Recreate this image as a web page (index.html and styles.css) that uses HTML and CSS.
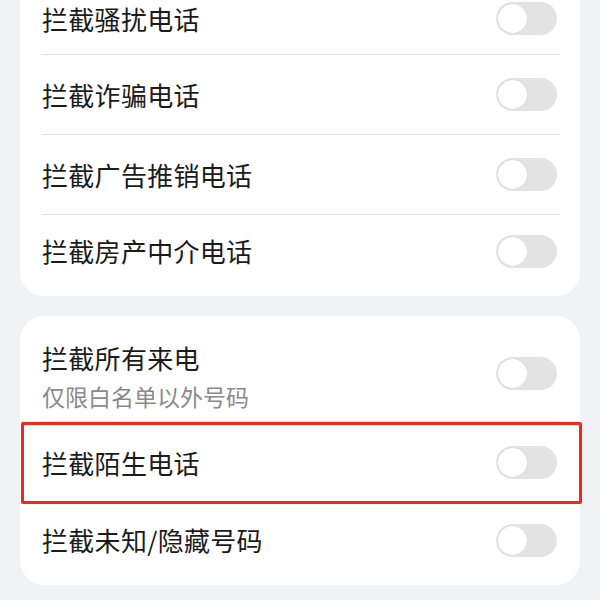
FILE: index.html
```html
<!DOCTYPE html>
<html lang="zh-CN">
<head>
<meta charset="utf-8">
<title>拦截设置</title>
<link rel="stylesheet" href="styles.css">
</head>
<body>
<main class="page">
  <section class="card">
    <div class="row"><span class="title">拦截骚扰电话</span><span class="switch"><span class="knob"></span></span></div>
    <div class="row"><span class="title">拦截诈骗电话</span><span class="switch"><span class="knob"></span></span></div>
    <div class="row"><span class="title">拦截广告推销电话</span><span class="switch"><span class="knob"></span></span></div>
    <div class="row"><span class="title">拦截房产中介电话</span><span class="switch"><span class="knob"></span></span></div>
  </section>
  <section class="card">
    <div class="row row-tall">
      <div class="texts"><span class="title">拦截所有来电</span><span class="sub">仅限白名单以外号码</span></div>
      <span class="switch"><span class="knob"></span></span>
    </div>
    <div class="row row-marked"><span class="title">拦截陌生电话</span><span class="switch"><span class="knob"></span></span></div>
    <div class="row"><span class="title">拦截未知/隐藏号码</span><span class="switch"><span class="knob"></span></span></div>
  </section>
</main>
</body>
</html>
```

FILE: styles.css
```css
html, body {
  margin: 0;
  padding: 0;
  background: #f1f2f4;
  overflow: hidden;
}
body {
  font-family: "Noto Sans CJK SC", "Noto Sans", sans-serif;
  color: #1b1b1b;
}
.page {
  margin-top: -26px;
  padding: 0 20px;
  display: flex;
  flex-direction: column;
  gap: 20px;
}
.card {
  background: #ffffff;
  border-radius: 24px;
  padding: 9px 0;
  display: flex;
  flex-direction: column;
}
.row {
  position: relative;
  display: flex;
  align-items: center;
  justify-content: space-between;
  min-height: 80px;
  margin: 0 21px 0 22px;
  border-bottom: 1px solid #e3e3e5;
  box-sizing: border-box;
}
.row:first-child,
.row:last-child {
  min-height: 72px;
}
.row:last-child {
  border-bottom: none;
}
.row.row-tall {
  min-height: 97px;
}
.row.row-marked {
  min-height: 82px;
}
.row-marked::after {
  content: "";
  position: absolute;
  top: 0;
  bottom: -1px;
  left: -21px;
  right: -23px;
  border: 3px solid #f0291f;
  border-radius: 2px;
  pointer-events: none;
}
.title {
  font-size: 26px;
  line-height: 34px;
  letter-spacing: 0.3px;
}
.texts {
  display: flex;
  flex-direction: column;
  gap: 6px;
  padding-top: 6px;
}
.sub {
  font-size: 23px;
  line-height: 30px;
  color: #8a8a8c;
}
.switch {
  position: relative;
  width: 61px;
  height: 33px;
  border-radius: 17px;
  background: #e3e3e3;
  margin-right: 2px;
  flex: none;
}
.knob {
  position: absolute;
  left: 2px;
  top: 2px;
  width: 29px;
  height: 29px;
  border-radius: 50%;
  background: #ffffff;
  box-shadow: 0 0 1px rgba(0,0,0,0.15);
}
```
